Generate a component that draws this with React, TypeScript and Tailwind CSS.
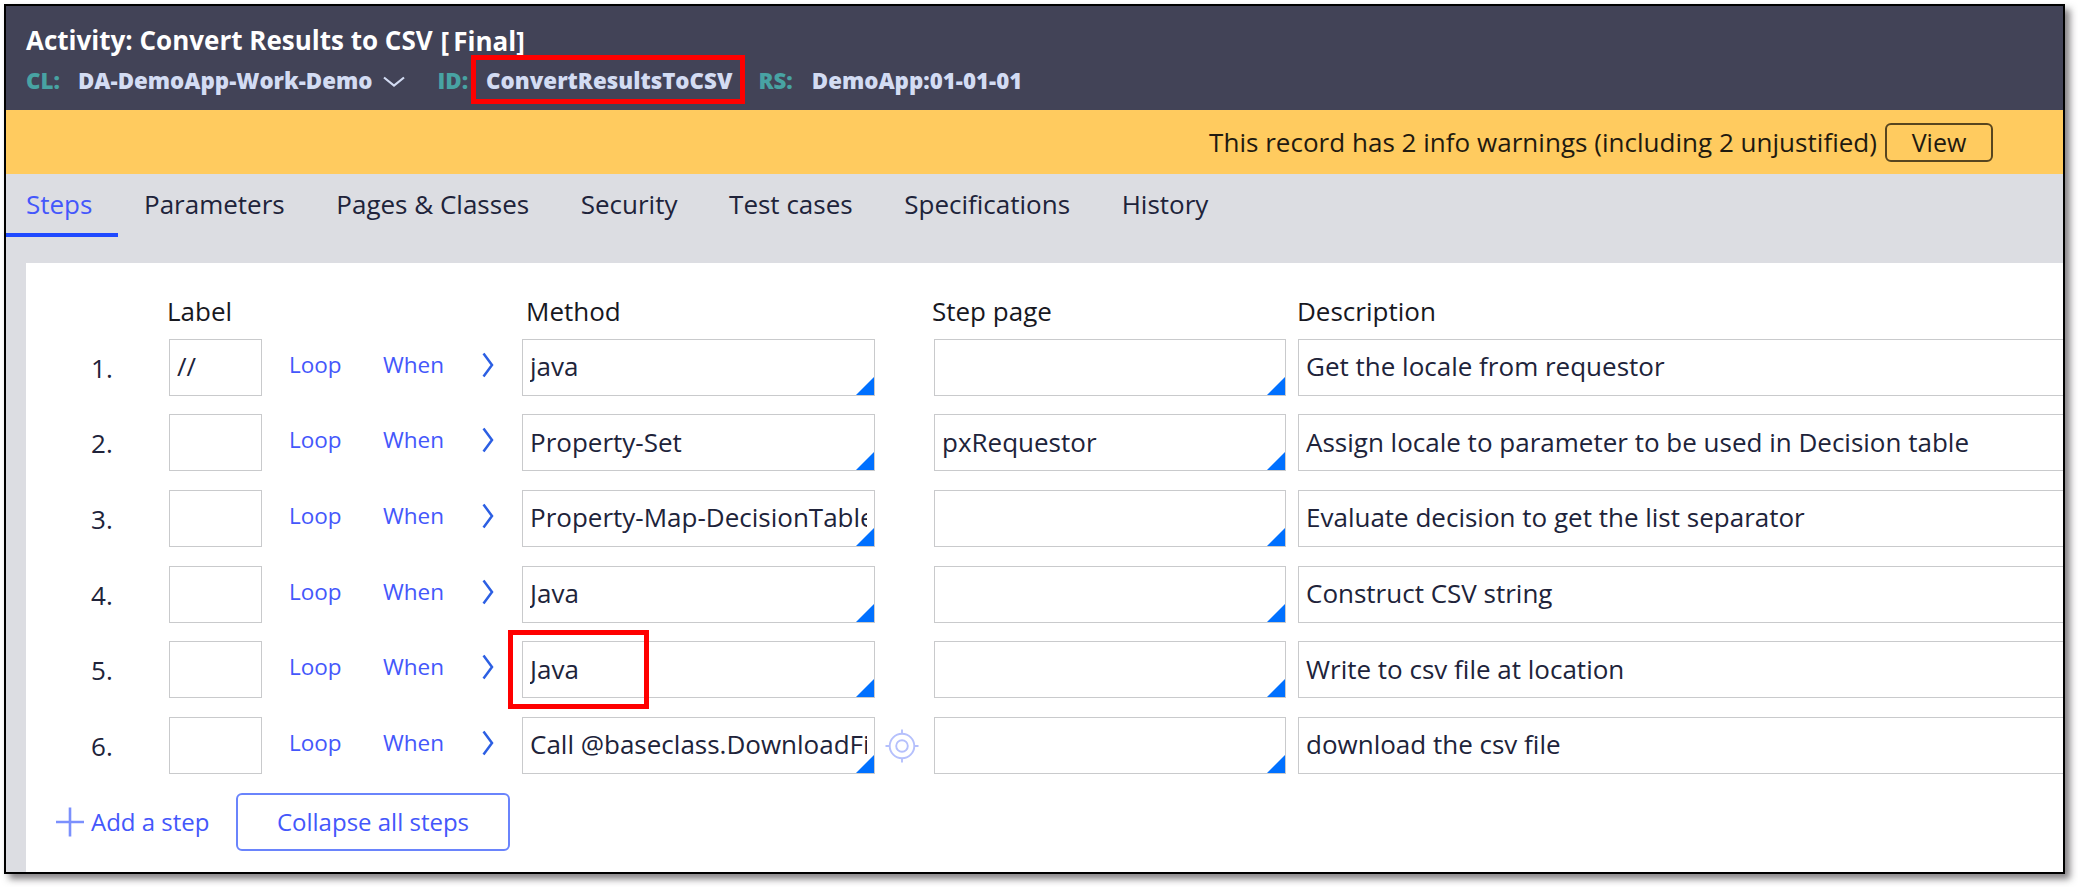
type Step = {
  label?: string;
  method: string;
  page?: string;
  description: string;
  highlighted?: boolean;
  target?: boolean;
};

const steps: Step[] = [
  { label: "//", method: "java", description: "Get the locale from requestor" },
  {
    method: "Property-Set",
    page: "pxRequestor",
    description: "Assign locale to parameter to be used in Decision table"
  },
  { method: "Property-Map-DecisionTable", description: "Evaluate decision to get the list separator" },
  { method: "Java", description: "Construct CSV string" },
  { method: "Java", description: "Write to csv file at location", highlighted: true },
  { method: "Call @baseclass.DownloadFile", description: "download the csv file", target: true }
];

const tabs = ["Steps", "Parameters", "Pages & Classes", "Security", "Test cases", "Specifications", "History"];

function ChevronDown() {
  return (
    <svg width="22" height="12" viewBox="0 0 22 12" fill="none" className="ml-[10px] mt-[1px] shrink-0">
      <path d="M1 1.5L11 9.5L21 1.5" stroke="#d3dcf3" strokeWidth="2.2" />
    </svg>
  );
}

function ChevronRight() {
  return (
    <svg width="12" height="26" viewBox="0 0 12 26" fill="none">
      <path d="M1.5 1.5L10 13L1.5 24.5" stroke="#2c5fe3" strokeWidth="2.5" />
    </svg>
  );
}

function TargetIcon() {
  return (
    <svg width="34" height="34" viewBox="0 0 34 34" fill="none" stroke="#b5c0fc" strokeWidth="1.9">
      <circle cx="17" cy="17" r="12.3" />
      <circle cx="17" cy="17" r="5.8" />
      <path d="M17 .5V5M17 29V33.5M.5 17H5M29 17H33.5" />
    </svg>
  );
}

function Field({ value, picker }: { value?: string; picker?: boolean }) {
  return (
    <div className="relative h-[57px] w-full border border-[#c9cacc] bg-white px-[7px] pt-[7.4px]">
      <div className="overflow-hidden whitespace-nowrap text-[26px] leading-[38px] text-[#20233a]">{value}</div>
      {picker && (
        <svg width="18" height="18" viewBox="0 0 18 18" className="absolute bottom-0 right-0">
          <path d="M18 0V18H0Z" fill="#0070ff" />
        </svg>
      )}
    </div>
  );
}

function StepRow({ step, index }: { step: Step; index: number }) {
  return (
    <div className="flex h-[75.67px] items-start">
      <div className="w-[143px] pl-[65px] pt-[10px] text-[26px] leading-[38px] text-[#20233a]">{index + 1}.</div>
      <div className="w-[93px]">
        <Field value={step.label} />
      </div>
      <div className="flex w-[260px] pl-[27px] pt-[9px] text-[22.5px] leading-[34px] text-[#4457fb]">
        <a className="w-[94px]">Loop</a>
        <a className="w-[99px]">When</a>
        <span className="pt-[4px]">
          <ChevronRight />
        </span>
      </div>
      <div className="relative w-[353px]">
        <Field value={step.method} picker />
        {step.highlighted && (
          <div className="absolute -left-[14px] -top-[11px] h-[79px] w-[141px] border-[5px] border-[#ff0000]" />
        )}
      </div>
      <div className="w-[59px] pl-[10px] pt-[12px]">{step.target && <TargetIcon />}</div>
      <div className="w-[352px]">
        <Field value={step.page} picker />
      </div>
      <div className="ml-[12px] w-[800px]">
        <Field value={step.description} />
      </div>
    </div>
  );
}

export default function App() {
  return (
    <div className="h-[887px] w-[2078px] overflow-hidden bg-white pl-[4px] pt-[4px] font-['Open_Sans',sans-serif]">
      <div className="flex h-[870px] w-[2061px] flex-col overflow-hidden border-2 border-black bg-[#dcdde2] shadow-[5px_5px_7px_0px_rgba(50,45,50,0.6)]">
        <header className="h-[104px] shrink-0 bg-[#424357] pl-[20px] pt-[15px]">
          <div className="flex whitespace-nowrap text-[26px] font-bold leading-[38px] text-white">
            <span>Activity: Convert Results to CSV</span>
            <span className="ml-[8px] pt-px">[</span>
            <span className="ml-[4px] pt-px">Final]</span>
          </div>
          <div className="flex h-[42px] items-center whitespace-nowrap text-[22.3px] font-extrabold text-[#d3dcf3]">
            <span className="w-[52px] text-[#48a3a3]">CL:</span>
            <span>DA-DemoApp-Work-Demo</span>
            <ChevronDown />
            <span className="ml-[33px] text-[#48a3a3]">ID:</span>
            <span className="relative ml-[18px]">
              ConvertResultsToCSV
              <span className="absolute -left-[15px] -top-[9px] h-[49px] w-[274px] border-[5px] border-[#ff0000]" />
            </span>
            <span className="ml-[26px] text-[#48a3a3]">RS:</span>
            <span className="ml-[19px]">DemoApp:01-01-01</span>
          </div>
        </header>

        <div className="flex h-[64px] shrink-0 items-center justify-end bg-[#ffcb5f] pr-[70px] text-[26px] text-[#1f1a10]">
          <span className="whitespace-nowrap tracking-[0.025px]">
            This record has 2 info warnings (including 2 unjustified)
          </span>
          <button className="ml-[8px] h-[39px] w-[108px] rounded-[6px] border-2 border-[#57451f] text-[25px] leading-[34px]">
            View
          </button>
        </div>

        <nav className="flex h-[63px] shrink-0 pr-4 text-[26px] leading-[38px] text-[#20233a]">
          {tabs.map((tab, i) =>
            i === 0 ? (
              <div key={tab} className="mr-[26px] w-[112px] border-b-[4px] border-[#1f49ff] pl-[20px] pt-[11px] text-[#4457fb]">
                {tab}
              </div>
            ) : (
              <div key={tab} className="mr-[51.6px] whitespace-nowrap pt-[11px]">
                {tab}
              </div>
            )
          )}
        </nav>

        <main className="ml-[20px] mt-[26px] w-[2100px] grow bg-white pt-[29px]">
          <div className="flex h-[46.6px] text-[26px] leading-[38px] text-[#17181f]">
            <div className="w-[359px] pl-[141px]">Label</div>
            <div className="w-[406px] pl-[141px]">Method</div>
            <div className="w-[506px] pl-[141px]">Step page</div>
            <div>Description</div>
          </div>
          {steps.map((step, i) => (
            <StepRow key={i} step={step} index={i} />
          ))}
          <div className="flex items-center pl-[30px] text-[24px] text-[#4457fb]">
            <svg width="28" height="30" viewBox="0 0 28 30" stroke="#7b90fd" strokeWidth="2.6">
              <path d="M14 0.5V29.5M0 15H28" />
            </svg>
            <span className="ml-[7px] w-[145px]">Add a step</span>
            <button className="h-[58px] w-[274px] rounded-[6px] border-2 border-[#6a84fc]">Collapse all steps</button>
          </div>
        </main>
      </div>
    </div>
  );
}
